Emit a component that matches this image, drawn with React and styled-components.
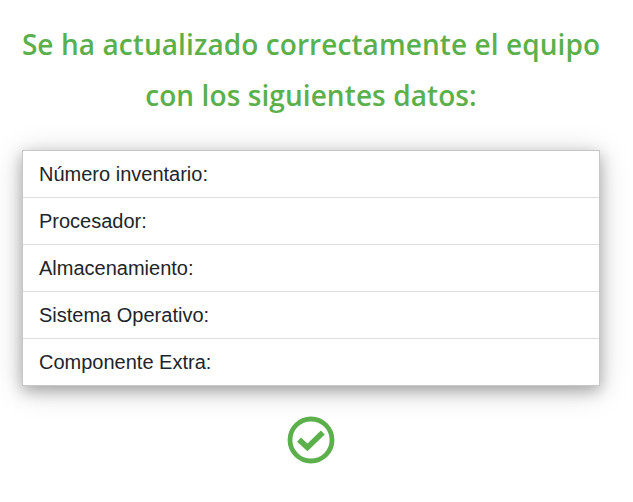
import React from "react";
import styled, { createGlobalStyle } from "styled-components";

const GlobalStyle = createGlobalStyle`
  body { margin: 0; background: #fff; }
  * { box-sizing: border-box; }
`;
const Page = styled.main`
  display: flex;
  flex-direction: column;
  align-items: center;
  width: 622px;
  padding: 19px 22px 0;
`;
const Title = styled.h1`
  margin: 0;
  color: #5cb04c;
  font: 600 28px/51px "Open Sans", "Noto Sans", sans-serif;
  text-align: center;
  white-space: nowrap;
`;
const Line = styled.span`
  display: block;
  letter-spacing: 0.08px;
`;
const List = styled.ul`
  width: 578px;
  margin: 29px 0 0;
  padding: 0;
  list-style: none;
  border: 1px solid #c8c8c8;
  box-shadow: 0 5px 14px rgba(0, 0, 0, 0.28), 0 4px 30px rgba(0, 0, 0, 0.17);
`;
const Item = styled.li`
  height: 47px;
  padding: 0 16px;
  border-bottom: 1px solid #ddd;
  color: #212529;
  font: 20px/46px "Liberation Sans", Arial, sans-serif;
  &:last-child { height: 46px; border-bottom: 0; }
`;
const Check = styled.svg`
  margin-top: 30px;
  width: 48px;
  height: 48px;
  fill: none;
  stroke: #5cb04c;
`;
const fields = ["Número inventario:", "Procesador:", "Almacenamiento:", "Sistema Operativo:", "Componente Extra:"];

export default function App() {
  return (
    <>
      <GlobalStyle />
      <Page>
        <Title>
          <Line>Se ha actualizado correctamente el equipo</Line>
          <Line>con los siguientes datos:</Line>
        </Title>
        <List>{fields.map((f) => <Item key={f}>{f}</Item>)}</List>
        <Check viewBox="0 0 48 48" aria-hidden="true">
          <circle cx="24" cy="24" r="21" strokeWidth="4.8" />
          <path d="M12 23.6L20.4 31.4L35.8 16.5" strokeWidth="5.6" />
        </Check>
      </Page>
    </>
  );
}
